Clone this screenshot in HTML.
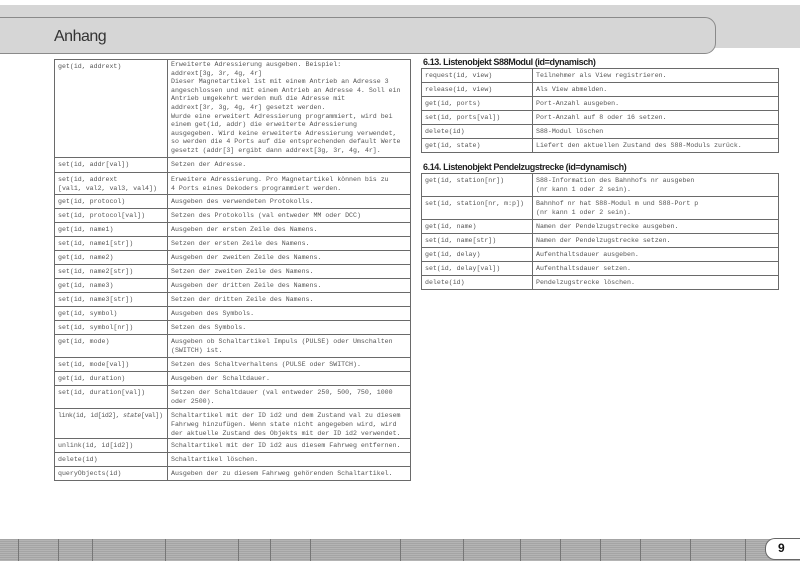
<!DOCTYPE html>
<html><head><meta charset="utf-8"><style>
*{margin:0;padding:0;box-sizing:border-box}
body{width:800px;height:566px;background:#fff;position:relative;overflow:hidden;font-family:"Liberation Sans",sans-serif}
.band{position:absolute;left:0;top:5px;width:800px;height:43px;background:#d6d6d6}
.box{position:absolute;left:-20px;top:17px;width:736px;height:37px;background:#d6d6d6;border:1.5px solid #8a8a8a;border-radius:11px}
.title{position:absolute;left:54px;top:28px;font-size:16px;color:#333;letter-spacing:-0.5px}
table{position:absolute;border-collapse:collapse;table-layout:fixed;font-family:"Liberation Mono",monospace;font-size:6.6px;color:#555;line-height:9px}
td{border:1px solid #6a6a6a;padding:2px 2px 0 3px;vertical-align:top;white-space:nowrap;overflow:hidden}
h3{position:absolute;font-size:9px;font-weight:bold;color:#222;letter-spacing:-0.4px;white-space:nowrap}
.strip{position:absolute;left:0;top:539px;width:800px;height:22px;background:repeating-linear-gradient(180deg,#a4a4a4 0 1px,#b4b4b4 1px 2px)}
.strip i{position:absolute;top:0;height:22px;border-left:1px solid #777}
.pn{position:absolute;left:765px;top:538px;width:40px;height:22px;background:#fff;border:1.5px solid #666;border-right:none;border-radius:10px 0 0 10px;font-weight:bold;font-size:12px;color:#111;padding-left:12px;line-height:19px}
</style></head><body>
<div class="band"></div><div class="box"></div>
<div class="title">Anhang</div>

<table style="left:54px;top:59px;width:356px">
<colgroup><col style="width:113px"><col style="width:243px"></colgroup>
<tr style="height:98px"><td>get(id, addrext)</td><td style="line-height:8.6px;padding-top:1px">Erweiterte Adressierung ausgeben. Beispiel:<br>addrext[3g, 3r, 4g, 4r]<br>Dieser Magnetartikel ist mit einem Antrieb an Adresse 3<br>angeschlossen und mit einem Antrieb an Adresse 4. Soll ein<br>Antrieb umgekehrt werden muß die Adresse mit<br>addrext[3r, 3g, 4g, 4r] gesetzt werden.<br>Wurde eine erweitert Adressierung programmiert, wird bei<br>einem get(id, addr) die erweiterte Adressierung<br>ausgegeben. Wird keine erweiterte Adressierung verwendet,<br>so werden die 4 Ports auf die entsprechenden default Werte<br>gesetzt (addr[3] ergibt dann addrext[3g, 3r, 4g, 4r].</td></tr>
<tr style="height:15px"><td>set(id, addr[val])</td><td>Setzen der Adresse.</td></tr>
<tr style="height:22px"><td>set(id, addrext<br>[val1, val2, val3, val4])</td><td>Erweitere Adressierung. Pro Magnetartikel können bis zu<br>4 Ports eines Dekoders programmiert werden.</td></tr>
<tr style="height:14px"><td>get(id, protocol)</td><td>Ausgeben des verwendeten Protokolls.</td></tr>
<tr style="height:14px"><td>set(id, protocol[val])</td><td>Setzen des Protokolls (val entweder MM oder DCC)</td></tr>
<tr style="height:14px"><td>get(id, name1)</td><td>Ausgeben der ersten Zeile des Namens.</td></tr>
<tr style="height:14px"><td>set(id, name1[str])</td><td>Setzen der ersten Zeile des Namens.</td></tr>
<tr style="height:14px"><td>get(id, name2)</td><td>Ausgeben der zweiten Zeile des Namens.</td></tr>
<tr style="height:14px"><td>set(id, name2[str])</td><td>Setzen der zweiten Zeile des Namens.</td></tr>
<tr style="height:14px"><td>get(id, name3)</td><td>Ausgeben der dritten Zeile des Namens.</td></tr>
<tr style="height:14px"><td>set(id, name3[str])</td><td>Setzen der dritten Zeile des Namens.</td></tr>
<tr style="height:14px"><td>get(id, symbol)</td><td>Ausgeben des Symbols.</td></tr>
<tr style="height:14px"><td>set(id, symbol[nr])</td><td>Setzen des Symbols.</td></tr>
<tr style="height:23px"><td>get(id, mode)</td><td>Ausgeben ob Schaltartikel Impuls (PULSE) oder Umschalten<br>(SWITCH) ist.</td></tr>
<tr style="height:14px"><td>set(id, mode[val])</td><td>Setzen des Schaltverhaltens (PULSE oder SWITCH).</td></tr>
<tr style="height:14px"><td>get(id, duration)</td><td>Ausgeben der Schaltdauer.</td></tr>
<tr style="height:23px"><td>set(id, duration[val])</td><td>Setzen der Schaltdauer (val entweder 250, 500, 750, 1000<br>oder 2500).</td></tr>
<tr style="height:29px"><td style="letter-spacing:-0.35px">link(id, id[id2], <i>state</i>[val])</td><td>Schaltartikel mit der ID id2 und dem Zustand val zu diesem<br>Fahrweg hinzufügen. Wenn state nicht angegeben wird, wird<br>der aktuelle Zustand des Objekts mit der ID id2 verwendet.</td></tr>
<tr style="height:14px"><td>unlink(id, id[id2])</td><td>Schaltartikel mit der ID id2 aus diesem Fahrweg entfernen.</td></tr>
<tr style="height:14px"><td>delete(id)</td><td>Schaltartikel löschen.</td></tr>
<tr style="height:14px"><td>queryObjects(id)</td><td>Ausgeben der zu diesem Fahrweg gehörenden Schaltartikel.</td></tr>
</table>

<h3 style="left:423px;top:57px">6.13. Listenobjekt S88Modul (id=dynamisch)</h3>
<table style="left:421px;top:68px;width:357px">
<colgroup><col style="width:111px"><col style="width:246px"></colgroup>
<tr style="height:14px"><td>request(id, view)</td><td>Teilnehmer als View registrieren.</td></tr>
<tr style="height:14px"><td>release(id, view)</td><td>Als View abmelden.</td></tr>
<tr style="height:14px"><td>get(id, ports)</td><td>Port-Anzahl ausgeben.</td></tr>
<tr style="height:14px"><td>set(id, ports[val])</td><td>Port-Anzahl auf 8 oder 16 setzen.</td></tr>
<tr style="height:14px"><td>delete(id)</td><td>S88-Modul löschen</td></tr>
<tr style="height:14px"><td>get(id, state)</td><td>Liefert den aktuellen Zustand des S88-Moduls zurück.</td></tr>
</table>

<h3 style="left:423px;top:162px">6.14. Listenobjekt Pendelzugstrecke (id=dynamisch)</h3>
<table style="left:421px;top:173px;width:357px">
<colgroup><col style="width:111px"><col style="width:246px"></colgroup>
<tr style="height:23px"><td>get(id, station[nr])</td><td>S88-Information des Bahnhofs nr ausgeben<br>(nr kann 1 oder 2 sein).</td></tr>
<tr style="height:23px"><td>set(id, station[nr, m:p])</td><td>Bahnhof nr hat S88-Modul m und S88-Port p<br>(nr kann 1 oder 2 sein).</td></tr>
<tr style="height:14px"><td>get(id, name)</td><td>Namen der Pendelzugstrecke ausgeben.</td></tr>
<tr style="height:14px"><td>set(id, name[str])</td><td>Namen der Pendelzugstrecke setzen.</td></tr>
<tr style="height:14px"><td>get(id, delay)</td><td>Aufenthaltsdauer ausgeben.</td></tr>
<tr style="height:14px"><td>set(id, delay[val])</td><td>Aufenthaltsdauer setzen.</td></tr>
<tr style="height:14px"><td>delete(id)</td><td>Pendelzugstrecke löschen.</td></tr>
</table>

<div class="strip">
<i style="left:18px"></i><i style="left:58px"></i><i style="left:92px"></i><i style="left:165px"></i><i style="left:238px"></i><i style="left:270px"></i><i style="left:310px"></i><i style="left:400px"></i><i style="left:463px"></i><i style="left:520px"></i><i style="left:560px"></i><i style="left:600px"></i><i style="left:640px"></i><i style="left:690px"></i><i style="left:745px"></i>
</div>
<div class="pn">9</div>
</body></html>
